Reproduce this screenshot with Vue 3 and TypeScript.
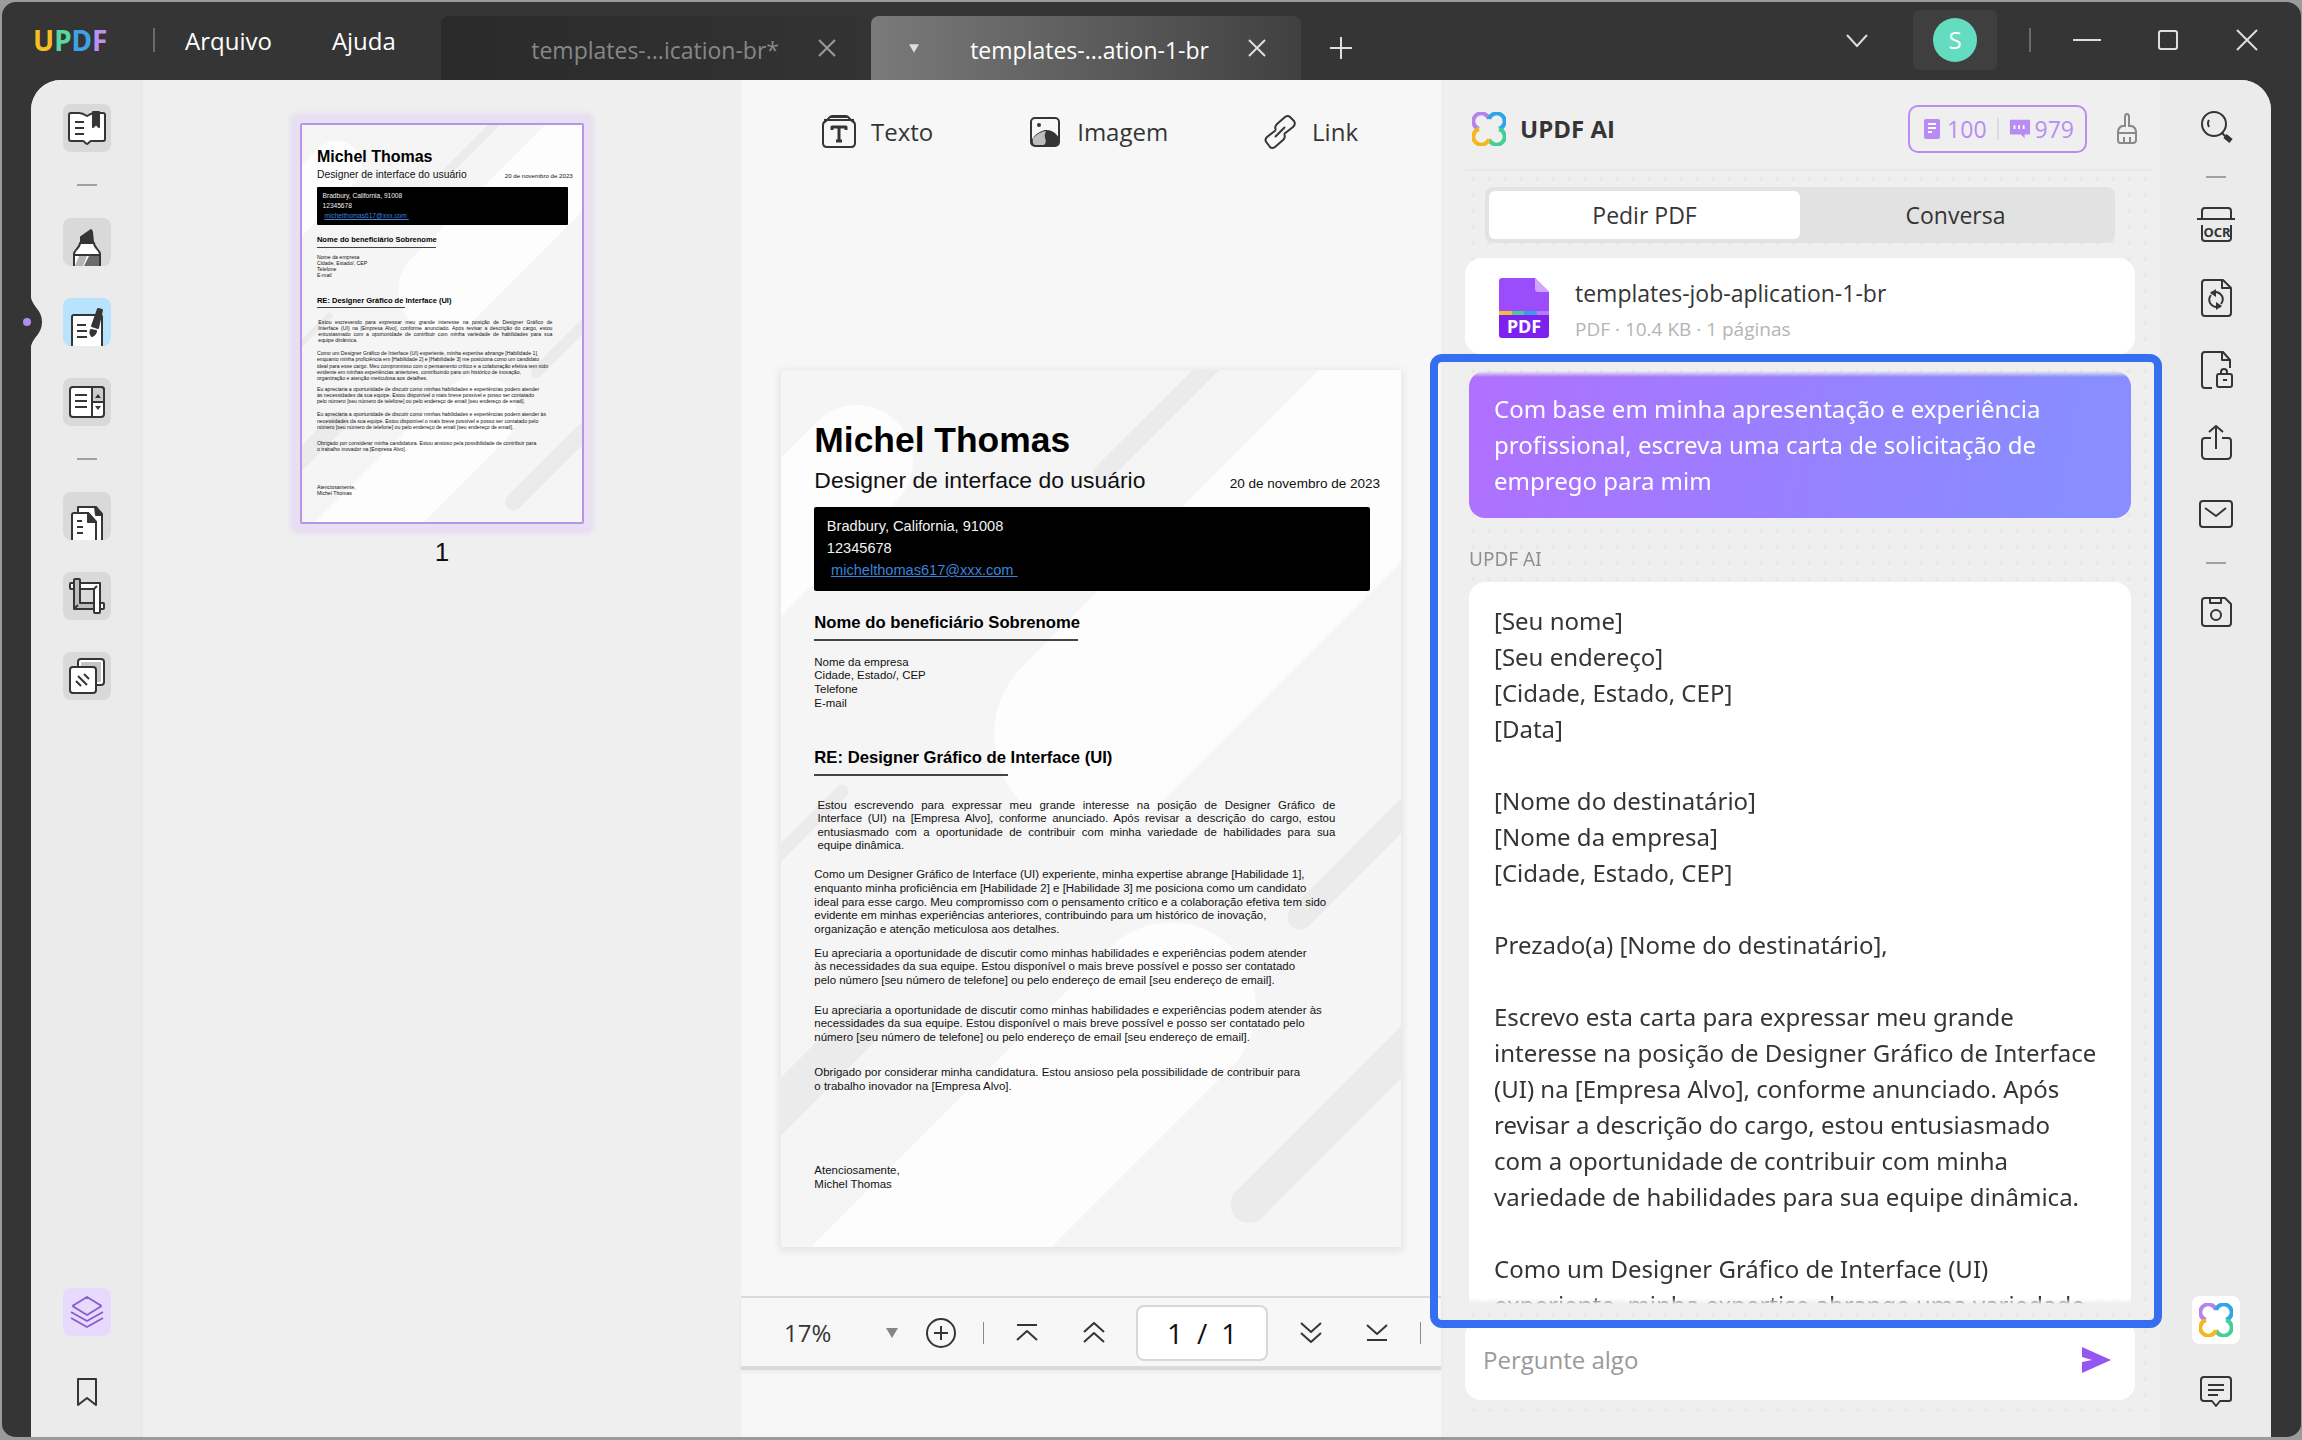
<script setup lang="ts">
import { ref } from 'vue'

interface Tool {
  id: string
  label: string
  icon: string
  active?: boolean
}

const icons: Record<string, string> = {
  reader:
    '<path class="w" d="M8 9h8c3 0 5 1 8 3 3-2 5-3 8-3h8q2 0 2 2v24q0 2-2 2H28c-1 0-3 3-4 3s-3-3-4-3H8q-2 0-2-2V11q0-2 2-2z"/><path class="d" d="M30 8h6v15l-3-3-3 3z"/><path d="M12 18h9M12 24h9M12 30h9"/>',
  highlight:
    '<path class="w" d="M17 25h14c0 5 6 7 6 11v14H11V36c0-4 6-6 6-11z"/><path fill="#b5b5b5" stroke="none" d="M16 38l-4 10h8l4-10z"/><path fill="#6b6b6b" stroke="none" d="M26 38l-5 10h15V38z"/><path d="M11 37h26"/><path class="d" d="M18 24v-5l10-7 1 2 1 10z"/>',
  edit:
    '<path class="w" d="M9 50V19q0-2 2-2h26q2 0 2 2v31z"/><path d="M14 27h9M14 33h10M14 39h10"/><path class="d" d="M35 11l4 1-4 18-6-2z"/><path class="d" d="M28 32l5 1c0 3-2 4-4 5-2-2-2-4-1-6z"/>',
  form:
    '<rect class="w" x="7" y="9" width="34" height="30" rx="3"/><path fill="#ccc" d="M29 9h9q3 0 3 3v12H29z"/><path d="M29 9v30M12 17h12M12 23h12M12 29h12"/><path class="d n" d="M32 20l3-4 3 4zM32 28l3 4 3-4z"/>',
  pages:
    '<path class="w" d="M15 50V15h18l6 7v28z"/><path class="d" d="M32 15l7 8h-6z"/><path class="w" d="M9 50V23q0-2 2-2h14l8 9v20z"/><path class="d" d="M25 21l8 9h-8z"/><path d="M14 29h5M14 35h6M14 41h6"/>',
  crop:
    '<path class="w" d="M11 11H8q-1 0-1 1v4q0 1 1 1h3zM37 31h3q1 0 1 1v4q0 1-1 1h-3z"/><path class="w" d="M17 11h20v29q0 1-1 1h-4q-1 0-1-1V17H17z"/><path fill="#bdbdbd" d="M12 7h4q1 0 1 1v23h14v6H11V8q0-1 1-1z"/><path d="M11 37l4-4M31 17l3-3"/>',
  layersPage:
    '<rect class="w" x="15" y="7" width="26" height="26" rx="3"/><rect class="n" fill="#c4c4c4" x="18" y="10" width="20" height="20"/><rect class="w" x="7" y="15" width="26" height="26" rx="3"/><path d="M13 29l5 5M15 24l9 9M21 22l5 5"/>',
  layers:
    '<path stroke="#8a5ed0" d="M24 9l13 8q2 1 0 2l-13 8-13-8q-2-1 0-2zM8 24l16 9 16-9M8 30l16 9 16-9"/>',
  bookmark: '<path d="M15 11h18v26l-9-7-9 7z"/>',
  search:
    '<ellipse cx="22" cy="20" rx="12" ry="12"/><path d="M17 16q-2 3 0 7M30 29l5 5"/><path d="M33 32l6 5" stroke-width="5"/>',
  convert:
    '<path d="M13 6h18l8 8v25q0 3-3 3H13q-3 0-3-3V9q0-3 3-3zM30 6v8h9"/><path d="M19 19q7-3 11 3 2 4-1 8M29 32q-7 3-11-3-2-4 1-8"/><path class="d n" d="M18 19l6-4v8zM30 32l-6-4v8z"/>',
  protect:
    '<path d="M20 42h-7q-3 0-3-3V9q0-3 3-3h18l7 8v8M30 6v8h8"/><rect x="25" y="28" width="15" height="13" rx="2"/><path d="M29 28v-2q0-3 3-3t3 3v2M31 34h4"/>',
  share:
    '<path d="M19 20h-6q-3 0-3 3v14q0 4 4 4h21q4 0 4-4V23q0-3-3-3h-6M24 31V8M17 14l7-6 7 6"/>',
  mail: '<rect x="8" y="11" width="32" height="26" rx="3"/><path d="M13 18l11 8 10-8"/>',
  save:
    '<path d="M13 10h20l6 6v19q0 3-3 3H13q-3 0-3-3V13q0-3 3-3zM18 10v5h11v-5"/><circle cx="24" cy="27" r="5"/>',
  comment:
    '<path d="M12 9h24q3 0 3 3v19q0 2-2 2h-9l-4 5-4-5h-8q-3 0-3-3V12q0-3 3-3z"/><path d="M16 17h16M16 22h16M16 27h10"/>',
  text:
    '<path d="M9 12h30M15 9h18M11 13q-3 1-3 4v18q0 4 4 4h24q4 0 4-4V17q0-3-3-4l-3-3q-1-2-3-2H17q-2 0-3 2z"/><path stroke-width="3" d="M17 22v-3h14v3M24 19v14M21 33h6"/>',
  image:
    '<rect x="10" y="10" width="28" height="28" rx="4"/><path class="d" d="M11 33q5-8 13-10 8-1 13 7v4q0 3-3 3H14q-3 0-3-4z"/><path class="n" fill="#bdbdbd" d="M12 30q6-6 13-7-2 4-1 7 2 4-1 7h-9q-3-1-2-7z"/><circle class="d n" cx="18" cy="17" r="2"/>',
  link:
    '<path d="M20 22l-9 7q-3 3 0 6l3 4q2 2 5 0l8-7q3-3 1-6M28 26l9-7q3-3 1-6l-4-4q-2-2-5 0l-8 7q-3 3-1 6M19 29l10-10"/>',
  plus: '<circle cx="24" cy="24" r="14"/><path d="M24 17v14M17 24h14"/>',
  first: '<path d="M14 16h20M14 31l10-9 10 9"/>',
  prev: '<path d="M14 23l10-9 10 9M14 33l10-9 10 9"/>',
  next: '<path d="M14 14l10 9 10-9M14 24l10 9 10-9"/>',
  last: '<path d="M14 16l10 9 10-9M14 31h20"/>',
}

const clover =
  '<path stroke="#b583ea" d="M17 7A8 8 0 1 0 7 17"/><path stroke="#2fa5ea" d="M17 7A8 8 0 1 1 27 17"/><path stroke="#43cf96" d="M27 17A8 8 0 1 1 17 27"/><path stroke="#f2b81d" d="M7 17A8 8 0 1 0 17 27"/>'

const leftGroups: Tool[][] = [
  [{ id: 'reader', label: 'Leitor', icon: 'reader' }],
  [
    { id: 'highlight', label: 'Comentar', icon: 'highlight' },
    { id: 'edit', label: 'Editar PDF', icon: 'edit', active: true },
    { id: 'form', label: 'Formulário', icon: 'form' },
  ],
  [
    { id: 'pages', label: 'Organizar páginas', icon: 'pages' },
    { id: 'crop', label: 'Cortar', icon: 'crop' },
    { id: 'layersPage', label: 'Ferramentas de página', icon: 'layersPage' },
  ],
]

const shareTools: Tool[] = [
  { id: 'convert', label: 'Converter', icon: 'convert' },
  { id: 'protect', label: 'Proteger', icon: 'protect' },
  { id: 'share', label: 'Compartilhar', icon: 'share' },
  { id: 'mail', label: 'Enviar por e-mail', icon: 'mail' },
]

const editTools: Tool[] = [
  { id: 'text', label: 'Texto', icon: 'text' },
  { id: 'image', label: 'Imagem', icon: 'image' },
  { id: 'link', label: 'Link', icon: 'link' },
]

const company = ['Nome da empresa', 'Cidade, Estado/, CEP', 'Telefone', 'E-mail'].join('\n')

const letterIntro = [
  'Estou escrevendo para expressar meu grande interesse na posição de Designer Gráfico de',
  'Interface (UI) na [Empresa Alvo], conforme anunciado. Após revisar a descrição do cargo, estou',
  'entusiasmado com a oportunidade de contribuir com minha variedade de habilidades para sua',
  'equipe dinâmica.',
]

const letterBody = [
  {
    kind: 'skills',
    text: [
      'Como um Designer Gráfico de Interface (UI) experiente, minha expertise abrange [Habilidade 1],',
      'enquanto minha proficiência em [Habilidade 2] e [Habilidade 3] me posiciona como um candidato',
      'ideal para esse cargo. Meu compromisso com o pensamento crítico e a colaboração efetiva tem sido',
      'evidente em minhas experiências anteriores, contribuindo para um histórico de inovação,',
      'organização e atenção meticulosa aos detalhes.',
    ].join('\n'),
  },
  {
    kind: 'contact',
    text: [
      'Eu apreciaria a oportunidade de discutir como minhas habilidades e experiências podem atender',
      'às necessidades da sua equipe. Estou disponível o mais breve possível e posso ser contatado',
      'pelo número [seu número de telefone] ou pelo endereço de email [seu endereço de email].',
    ].join('\n'),
  },
  {
    kind: 'repeat',
    text: [
      'Eu apreciaria a oportunidade de discutir como minhas habilidades e experiências podem atender às',
      'necessidades da sua equipe. Estou disponível o mais breve possível e posso ser contatado pelo',
      'número [seu número de telefone] ou pelo endereço de email [seu endereço de email].',
    ].join('\n'),
  },
  {
    kind: 'thanks',
    text: [
      'Obrigado por considerar minha candidatura. Estou ansioso pela possibilidade de contribuir para',
      'o trabalho inovador na [Empresa Alvo].',
    ].join('\n'),
  },
  { kind: 'sign', text: 'Atenciosamente,\nMichel Thomas' },
]

const question = [
  'Com base em minha apresentação e experiência',
  'profissional, escreva uma carta de solicitação de',
  'emprego para mim',
].join('\n')

const answer = [
  '[Seu nome]',
  '[Seu endereço]',
  '[Cidade, Estado, CEP]',
  '[Data]',
  '',
  '[Nome do destinatário]',
  '[Nome da empresa]',
  '[Cidade, Estado, CEP]',
  '',
  'Prezado(a) [Nome do destinatário],',
  '',
  'Escrevo esta carta para expressar meu grande',
  'interesse na posição de Designer Gráfico de Interface',
  '(UI) na [Empresa Alvo], conforme anunciado. Após',
  'revisar a descrição do cargo, estou entusiasmado',
  'com a oportunidade de contribuir com minha',
  'variedade de habilidades para sua equipe dinâmica.',
  '',
  'Como um Designer Gráfico de Interface (UI)',
  'experiente, minha expertise abrange uma variedade',
].join('\n')

// The letter is laid out once in A4 points (595 x 842) and shown at two magnifications.
const views = { thumb: 0.471, main: 1.042 }

const currentPage = ref('1')
const prompt = ref('')
const mode = ref<'pdf' | 'chat'>('pdf')
</script>

<template>
  <div class="window">
    <header class="titlebar">
      <div class="brand" aria-label="UPDF"><span class="u">U</span><span class="p">P</span><span class="dd">D</span><span class="f">F</span></div>
      <span class="bar-sep"></span>
      <nav class="menu">
        <button type="button">Arquivo</button>
        <button type="button">Ajuda</button>
      </nav>
      <div class="tabs">
        <div class="tab idle">
          <button type="button" class="tab-name">templates-...ication-br*</button>
          <button type="button" class="x" aria-label="Fechar guia">
            <svg viewBox="0 0 20 20"><path d="M2 2l16 16M18 2L2 18" /></svg>
          </button>
        </div>
        <div class="tab current">
          <svg class="caret" viewBox="0 0 12 10"><path d="M0 0h12L6 10z" /></svg>
          <button type="button" class="tab-name">templates-...ation-1-br</button>
          <button type="button" class="x" aria-label="Fechar guia">
            <svg viewBox="0 0 20 20"><path d="M2 2l16 16M18 2L2 18" /></svg>
          </button>
        </div>
        <button type="button" class="add" aria-label="Nova guia">
          <svg viewBox="0 0 24 24"><path d="M12 1v22M1 12h22" /></svg>
        </button>
      </div>
      <div class="controls">
        <button type="button" class="ctl" aria-label="Mais guias">
          <svg viewBox="0 0 24 24"><path d="M2 7l10 11L22 7" /></svg>
        </button>
        <button type="button" class="account"><span>S</span></button>
        <span class="bar-sep"></span>
        <button type="button" class="ctl min" aria-label="Minimizar">
          <svg viewBox="0 0 28 24"><path d="M0 12h28" /></svg>
        </button>
        <button type="button" class="ctl" aria-label="Maximizar">
          <svg viewBox="0 0 24 24"><rect x="3" y="3" width="18" height="18" rx="2" /></svg>
        </button>
        <button type="button" class="ctl" aria-label="Fechar">
          <svg viewBox="0 0 24 24"><path d="M2 2l20 20M22 2L2 22" /></svg>
        </button>
      </div>
    </header>

    <svg class="notch" viewBox="0 0 20 48">
      <path fill="#353535" d="M0 0H8C10 9 19 12 19 24S10 39 8 48H0z" />
      <circle cx="4" cy="24" r="4" fill="#b38cf0" />
    </svg>

    <main class="body">
      <aside class="rail left">
        <template v-for="(group, i) in leftGroups" :key="i">
          <hr v-if="i > 0" />
          <button
            v-for="t in group"
            :key="t.id"
            type="button"
            class="tool"
            :class="{ active: t.active }"
            :aria-label="t.label"
          >
            <svg class="ico" viewBox="0 0 48 48" v-html="icons[t.icon]"></svg>
          </button>
        </template>
        <div class="rail-end">
          <button type="button" class="tool lilac" aria-label="Miniaturas">
            <svg class="ico" viewBox="0 0 48 48" v-html="icons.layers"></svg>
          </button>
          <button type="button" class="tool bare" aria-label="Marcadores">
            <svg class="ico" viewBox="0 0 48 48" v-html="icons.bookmark"></svg>
          </button>
        </div>
      </aside>

      <section v-for="(scale, view) in views" :key="view" :class="view === 'main' ? 'viewer' : 'thumbs'">
        <div v-if="view === 'main'" class="edit-bar">
          <button v-for="t in editTools" :key="t.id" type="button">
            <svg class="ico" viewBox="0 0 48 48" v-html="icons[t.icon]"></svg>{{ t.label }}
          </button>
        </div>

        <div class="sheet">
          <article class="letter" :style="{ zoom: scale }">
            <svg class="backdrop" viewBox="0 0 620 877" preserveAspectRatio="none">
              <g stroke="#fdfdfd">
                <path stroke-width="112" d="M76 91L-80 247" />
                <path stroke-width="194" d="M310 365L760-85" />
                <path stroke-width="170" d="M390 637L0 1027" />
              </g>
              <g stroke="#ebebeb">
                <path stroke-width="19" d="M322 103L460-35" />
                <path stroke-width="13" d="M61 421L-20 502" />
                <path stroke-width="25" d="M519 547L660 406" />
                <path stroke-width="37" d="M468 834L680 622" />
                <path stroke-width="41" d="M82 654L-40 776" />
              </g>
            </svg>
            <h1>Michel Thomas</h1>
            <div class="role"><span>Designer de interface do usuário</span><time>20 de novembro de 2023</time></div>
            <address>
              <span>Bradbury, California, 91008</span>
              <span>12345678</span>
              <a href="#">michelthomas617@xxx.com&nbsp;</a>
            </address>
            <h2>Nome do beneficiário Sobrenome</h2>
            <p class="company">{{ company }}</p>
            <h2 class="subject">RE: Designer Gráfico de Interface (UI)</h2>
            <p class="intro"><span v-for="line in letterIntro" :key="line">{{ line }}</span></p>
            <p v-for="p in letterBody" :key="p.kind" :class="p.kind">{{ p.text }}</p>
          </article>
        </div>

        <p v-if="view === 'thumb'" class="page-no">1</p>

        <div v-else class="nav-bar">
          <label class="zoom-level">
            <select aria-label="Zoom"><option>17%</option></select>
            <svg viewBox="0 0 12 10"><path d="M0 0h12L6 10z" /></svg>
          </label>
          <button type="button" aria-label="Ampliar"><svg class="ico" viewBox="0 0 48 48" v-html="icons.plus"></svg></button>
          <i></i>
          <button type="button" aria-label="Primeira página"><svg class="ico" viewBox="0 0 48 48" v-html="icons.first"></svg></button>
          <button type="button" aria-label="Página anterior"><svg class="ico" viewBox="0 0 48 48" v-html="icons.prev"></svg></button>
          <label class="page-field">
            <input v-model="currentPage" aria-label="Página atual" />
            <span>/</span>
            <span>1</span>
          </label>
          <button type="button" aria-label="Próxima página"><svg class="ico" viewBox="0 0 48 48" v-html="icons.next"></svg></button>
          <button type="button" aria-label="Última página"><svg class="ico" viewBox="0 0 48 48" v-html="icons.last"></svg></button>
          <i></i>
        </div>
      </section>

      <section class="ai">
        <header class="ai-head">
          <svg class="clover" viewBox="0 0 34 34" v-html="clover"></svg>
          <h2>UPDF AI</h2>
          <div class="quota">
            <svg viewBox="0 0 20 22"><rect x="2" y="1" width="16" height="20" rx="2" /><path d="M6 6h8M6 10h8M6 14h4" /></svg>
            <span>100</span>
            <i></i>
            <svg viewBox="0 0 24 22"><path class="fill" d="M2 1h20q1 0 1 1v14q0 1-1 1h-5v4l-4-4H2q-1 0-1-1V2q0-1 1-1z" /><path d="M6 7v4M11 7v4M16 7v4" /></svg>
            <span>979</span>
          </div>
          <button type="button" class="brush" aria-label="Limpar conversa">
            <svg viewBox="0 0 24 32"><path d="M10 13V4q0-3 2-3t2 3v9h3q4 2 4 6v8q0 3-3 3H5q-2 0-2-3v-8q0-4 4-6zM3 20h18M9 24v6M15 24v6" /></svg>
          </button>
        </header>

        <div class="ai-main">
          <div class="modes">
            <button type="button" :class="{ on: mode === 'pdf' }" @click="mode = 'pdf'">Pedir PDF</button>
            <button type="button" :class="{ on: mode === 'chat' }" @click="mode = 'chat'">Conversa</button>
          </div>

          <div class="file">
            <svg viewBox="0 0 50 60">
              <path fill="#9c4dfb" d="M3 0h33l14 14v22H0V3q0-3 3-3z" />
              <path fill="#cfa5ff" d="M36 0l14 14H39q-3 0-3-3z" />
              <path fill="#7d22ee" d="M0 37h50v20q0 3-3 3H3q-3 0-3-3z" />
              <path fill="#f3bd3a" d="M0 33h13v4H0z" /><path fill="#4cc8a0" d="M13 33h12v4H13z" />
              <path fill="#3f9bea" d="M25 33h13v4H25z" /><path fill="#b57cf8" d="M38 33h12v4H38z" />
              <text x="25" y="55" text-anchor="middle">PDF</text>
            </svg>
            <div>
              <h3>templates-job-aplication-1-br</h3>
              <p>PDF · 10.4 KB · 1 páginas</p>
            </div>
          </div>

          <div class="chat-frame">
            <div class="chat">
              <p class="question">{{ question }}</p>
              <span class="author">UPDF AI</span>
              <p class="answer">{{ answer }}</p>
            </div>
          </div>

          <form class="ask" @submit.prevent>
            <input v-model="prompt" placeholder="Pergunte algo" aria-label="Pergunte algo" />
            <button type="submit" aria-label="Enviar">
              <svg viewBox="0 0 30 26"><path d="M1 0l29 13L1 26V15l10-2-10-3z" /></svg>
            </button>
          </form>
        </div>
      </section>

      <aside class="rail right">
        <button type="button" class="tool bare" aria-label="Pesquisar">
          <svg class="ico" viewBox="0 0 48 48" v-html="icons.search"></svg>
        </button>
        <hr />
        <button type="button" class="tool bare" aria-label="OCR">
          <svg class="ico" viewBox="0 0 48 48">
            <path d="M10 17V9q0-3 3-3h23q3 0 3 3v8M5 17h38M10 23v13q0 3 3 3h23q3 0 3-3V23" />
            <text x="25" y="35" text-anchor="middle">OCR</text>
          </svg>
        </button>
        <button v-for="t in shareTools" :key="t.id" type="button" class="tool bare" :aria-label="t.label">
          <svg class="ico" viewBox="0 0 48 48" v-html="icons[t.icon]"></svg>
        </button>
        <hr />
        <button type="button" class="tool bare" aria-label="Salvar">
          <svg class="ico" viewBox="0 0 48 48" v-html="icons.save"></svg>
        </button>
        <div class="rail-end">
          <button type="button" class="tool white" aria-label="UPDF AI">
            <svg class="clover" viewBox="0 0 34 34" v-html="clover"></svg>
          </button>
          <button type="button" class="tool bare" aria-label="Comentários">
            <svg class="ico" viewBox="0 0 48 48" v-html="icons.comment"></svg>
          </button>
        </div>
      </aside>
    </main>
  </div>
</template>

<style>
body {
  margin: 0;
  background: #9b9b9b;
}
.ico {
  display: block;
  width: 48px;
  height: 48px;
  fill: none;
  stroke: #353535;
  stroke-width: 2;
  stroke-linejoin: round;
}
.ico .w {
  fill: #fff;
}
.ico .d {
  fill: #353535;
}
.ico .n {
  stroke: none;
}
</style>

<style scoped>
* {
  box-sizing: border-box;
}
button {
  padding: 0;
  border: 0;
  background: none;
  color: inherit;
  font: inherit;
}
h1, h2, h3, p {
  margin: 0;
}
svg {
  flex: none;
}
.window {
  position: relative;
  display: flex;
  flex-direction: column;
  height: 100vh;
  padding: 0 30px 0 29px;
  border: 2px solid #9b9b9b;
  border-bottom-width: 3px;
  border-right-width: 1px;
  border-radius: 16px;
  background: #353535;
  color: #353535;
  font: 24px/36px "Open Sans", "Noto Sans", sans-serif;
}

/* title bar */
.titlebar {
  display: flex;
  flex: none;
  height: 78px;
  color: #fff;
}
.brand {
  width: 80px;
  margin: 20px 40px 0 2px;
  font: 700 28px/36px "Noto Sans", sans-serif;
}
.brand .u { color: #f6bf26; }
.brand .p { color: #57d69e; }
.brand .dd { color: #3fa2e6; }
.brand .f { color: #bb92f3; }
.bar-sep {
  width: 2px;
  height: 24px;
  margin-top: 26px;
  background: #6a6a6a;
}
.menu {
  display: flex;
  gap: 60px;
  width: 286px;
  padding: 0 0 0 30px;
}
.menu button {
  height: 78px;
}
.tabs {
  display: flex;
  align-items: flex-end;
}
.tab {
  display: flex;
  align-items: center;
  justify-content: flex-end;
  width: 430px;
  height: 64px;
  padding: 4px 32px 0 0;
  border-radius: 8px 8px 0 0;
  font-size: 23px;
}
.tab.idle {
  background: linear-gradient(90deg, #2a2a2a, #333);
  color: #878787;
}
.tab.current {
  background: linear-gradient(90deg, #7a7a7a, #404040);
}
.tab-name {
  margin-right: 38px;
}
.x svg {
  display: block;
  width: 20px;
  height: 20px;
  margin: 0 2px 4px 0;
}
.x svg, .add svg, .ctl svg {
  fill: none;
  stroke: #dedede;
  stroke-width: 2;
}
.idle .x svg {
  stroke: #9a9a9a;
}
.caret {
  width: 10px;
  height: 9px;
  margin: 0 auto 4px 38px;
  fill: #dedede;
}
.add {
  height: 64px;
  margin-left: 28px;
}
.add svg {
  display: block;
  width: 24px;
  height: 24px;
}
.controls {
  display: flex;
  margin-left: auto;
}
.ctl {
  width: 24px;
  height: 76px;
  margin-left: 55px;
}
.ctl.min {
  width: 28px;
  margin-left: 42px;
}
.ctl svg {
  display: block;
  width: 100%;
  height: 24px;
}
.ctl:last-child {
  margin-right: 12px;
}
.account {
  display: flex;
  align-items: center;
  justify-content: center;
  width: 84px;
  height: 60px;
  margin: 8px 32px 0 44px;
  border-radius: 6px;
  background: #3f3f3f;
}
.account span {
  width: 44px;
  border-radius: 50%;
  background: #64dcc0;
  line-height: 44px;
}
.notch {
  position: absolute;
  top: 296px;
  left: 21px;
  z-index: 2;
  width: 20px;
  height: 48px;
}

/* columns */
.body {
  display: grid;
  flex: 1;
  grid-template-columns: 112px 598fr 700fr 719fr 111px;
  grid-template-rows: 100%;
  min-height: 0;
  border-radius: 30px 30px 0 0;
  background: #efefef;
}
.rail {
  display: flex;
  flex-direction: column;
  align-items: center;
  gap: 32px;
  padding: 24px 0 21px;
  border-radius: 30px 0 0 0;
  background: #ebebeb;
}
.rail.left {
  border-right: 3px solid #e8e8e8;
  padding-left: 3px;
}
.rail.right {
  gap: 24px;
  border-radius: 0 30px 0 0;
}
.rail hr {
  width: 20px;
  height: 2px;
  margin: 0;
  border: 0;
  background: #a2a2a2;
}
.tool {
  width: 48px;
  height: 48px;
  border-radius: 8px;
  background: #d9d9d9;
  overflow: hidden;
}
.tool.active { background: #b8e3fc; }
.tool.lilac { background: #e8dafc; }
.tool.white { background: #fff; }
.tool.bare { background: none; }
.tool text {
  fill: #353535;
  stroke: none;
  font: 700 13px "Noto Sans", sans-serif;
}
.rail-end {
  display: flex;
  flex-direction: column;
  gap: 32px;
  margin-top: auto;
}
.right .rail-end {
  gap: 24px;
}
.clover {
  display: block;
  width: 34px;
  height: 34px;
  margin: auto;
  fill: none;
  stroke-width: 4;
}

/* page thumbnail */
.thumbs {
  display: flex;
  flex-direction: column;
  align-items: center;
  padding-top: 43px;
}
.thumbs .sheet {
  border: 2px solid #b795e6;
  border-radius: 2px;
  box-shadow: 0 0 4px 10px rgba(214, 190, 250, 0.3);
}
.page-no {
  margin-top: 10px;
  color: #111;
  font: 26px/36px "Liberation Sans", sans-serif;
}

/* document */
.viewer {
  display: flex;
  flex-direction: column;
  align-items: center;
  min-width: 0;
  background: #f7f7f7;
}
.edit-bar {
  display: flex;
  justify-content: space-between;
  width: 100%;
  margin-bottom: auto;
  padding: 28px 83px 0 74px;
}
.edit-bar button {
  display: flex;
  align-items: center;
  gap: 8px;
}
.viewer .sheet {
  margin-bottom: 49px;
  box-shadow: 0 2px 8px 2px rgba(0, 0, 0, 0.08);
}
.nav-bar {
  display: flex;
  align-items: center;
  justify-content: space-between;
  width: 100%;
  height: 74px;
  margin-bottom: 67px;
  padding: 2px 20px 0 43px;
  border-top: 2px solid #dadada;
  border-bottom: 4px solid #dadada;
  box-shadow: 0 2px 4px rgba(0, 0, 0, 0.05);
}
.zoom-level {
  display: flex;
  align-items: center;
  gap: 46px;
}
.zoom-level select {
  appearance: none;
  width: 56px;
  border: 0;
  background: none;
  color: inherit;
  font: inherit;
}
.zoom-level svg {
  width: 12px;
  height: 12px;
  fill: #858585;
}
.nav-bar i {
  width: 1px;
  height: 22px;
  background: #8a8a8a;
}
.page-field {
  display: flex;
  align-items: center;
  justify-content: center;
  gap: 14px;
  width: 132px;
  height: 56px;
  border: 2px solid #d8d8d8;
  border-radius: 8px;
  background: #fff;
  color: #111;
  font-size: 28px;
}
.page-field input {
  width: 16px;
  padding: 0;
  border: 0;
  outline: 0;
  background: none;
  color: inherit;
  font: inherit;
}

/* letter, in points */
.letter {
  position: relative;
  width: 595px;
  height: 842px;
  padding: 48px 20px 0 32px;
  overflow: hidden;
  background: #f5f5f5;
  color: #111;
  font: 11px/13px "Liberation Sans", sans-serif;
}
.letter > :not(svg) {
  position: relative;
}
.backdrop {
  position: absolute;
  top: 0;
  left: 0;
  width: 100%;
  height: 100%;
  fill: none;
  stroke-linecap: round;
}
.letter h1 {
  color: #000;
  font-size: 34px;
  line-height: 40px;
}
.role {
  display: flex;
  align-items: baseline;
  justify-content: space-between;
  margin-top: 6px;
  font-size: 22px;
  line-height: 24px;
}
.role time {
  font-size: 13px;
}
.letter address {
  display: flex;
  flex-direction: column;
  align-items: flex-start;
  width: 533px;
  margin-top: 11px;
  padding: 9px 12px;
  border-radius: 2px;
  background: #000;
  color: #f2f2f2;
  font-style: normal;
  font-size: 14px;
  line-height: 21px;
}
.letter address a {
  margin-left: 4px;
  color: #3b82d8;
}
.letter h2 {
  width: 253px;
  margin-top: 21px;
  padding-bottom: 5px;
  border-bottom: 2px solid #444;
  color: #000;
  font-size: 16px;
  line-height: 20px;
  white-space: nowrap;
}
.letter p {
  white-space: pre;
}
.letter .company {
  margin-top: 14px;
}
.letter .subject {
  width: 186px;
  margin-top: 36px;
}
.letter .intro {
  width: 500px;
  margin-top: 22px;
  padding-left: 3px;
  white-space: normal;
}
.intro span {
  display: block;
  text-align: justify;
  text-align-last: justify;
}
.intro span:last-child {
  text-align-last: left;
}
.letter .skills { margin-top: 15px; }
.letter .contact { margin-top: 10px; }
.letter .repeat { margin-top: 16px; }
.letter .thanks { margin-top: 21px; }
.letter .sign { margin-top: 68px; }

/* assistant */
.ai {
  display: flex;
  flex-direction: column;
  min-width: 0;
  padding: 0 7px 25px 24px;
}
.ai-head {
  display: flex;
  flex: none;
  align-items: center;
  height: 91px;
  padding-top: 8px;
  border-bottom: 2px solid #e8e8e8;
}
.ai-head .clover {
  margin: 0 14px 0 7px;
}
.ai-head h2 {
  margin-right: auto;
  font-size: 24px;
  line-height: 36px;
}
.quota {
  display: flex;
  align-items: center;
  gap: 4px;
  height: 48px;
  padding: 0 11px;
  border: 2px solid #b98cf3;
  border-radius: 10px;
  color: #b98cf3;
  font-size: 23px;
}
.quota svg {
  width: 22px;
  height: 22px;
  fill: #b98cf3;
}
.quota path {
  stroke: #fff;
  stroke-width: 2;
}
.quota path.fill {
  stroke: none;
}
.quota i {
  width: 2px;
  height: 22px;
  margin: 0 6px;
  background: #dcdcdc;
}
.brush {
  margin: 0 14px 0 28px;
}
.brush svg {
  display: block;
  width: 24px;
  height: 32px;
  fill: none;
  stroke: #8a8a8a;
  stroke-width: 2;
}
.ai-main {
  display: flex;
  flex: 1;
  flex-direction: column;
  min-height: 0;
  padding: 16px 18px 12px 0;
  background: radial-gradient(circle at 8px 8px, #e8e8e8 1px, transparent 3px) 0 0 / 16px 16px;
}
.modes {
  display: flex;
  flex: none;
  height: 56px;
  margin: 0 20px;
  padding: 4px;
  border-radius: 8px;
  background: #e2e2e2;
  font-size: 23px;
}
.modes button {
  flex: 1;
  border-radius: 6px;
}
.modes .on {
  background: #fff;
}
.file {
  display: flex;
  flex: none;
  gap: 26px;
  height: 96px;
  margin-top: 15px;
  padding: 20px 34px 0;
  border-radius: 16px;
  background: #fff;
}
.file svg {
  width: 50px;
  height: 60px;
}
.file text {
  fill: #fff;
  font: 700 18px "Noto Sans", sans-serif;
}
.file h3 {
  margin-top: -3px;
  font-size: 23px;
  font-weight: 400;
}
.file p {
  color: #b4b4b4;
  font-size: 19px;
  line-height: 36px;
}
.chat-frame {
  position: relative;
  display: flex;
  flex: 1;
  min-height: 0;
  padding: 17px 4px 0;
}
.chat-frame::after {
  content: "";
  position: absolute;
  inset: 0 -27px -8px -35px;
  border: 8px solid #356ff0;
  border-radius: 12px;
  pointer-events: none;
}
.chat {
  flex: 1;
  margin-bottom: 16px;
  overflow: hidden;
  font-family: "Noto Sans", sans-serif;
  mask-image: linear-gradient(transparent, #000 6px, #000 calc(100% - 6px), transparent);
}
.question, .answer {
  padding: 21px 25px;
  border-radius: 16px;
  white-space: pre;
}
.question {
  padding: 20px 25px 19px;
  background: linear-gradient(100deg, #b070ff, #9880ff 50%, #888dff 90%);
  color: #fff;
}
.author {
  display: block;
  margin: 23px 0 5px;
  color: #909090;
  font-size: 19px;
}
.answer {
  background: #fff;
}
.ask {
  display: flex;
  flex: none;
  align-items: center;
  height: 80px;
  padding: 0 24px 0 18px;
  border-radius: 16px;
  background: #fff;
}
.ask input {
  flex: 1;
  min-width: 0;
  padding: 0;
  border: 0;
  outline: 0;
  background: none;
  font: inherit;
}
.ask input::placeholder {
  color: #9a9a9a;
}
.ask svg {
  display: block;
  width: 30px;
  height: 26px;
  fill: #9455f4;
}
</style>
